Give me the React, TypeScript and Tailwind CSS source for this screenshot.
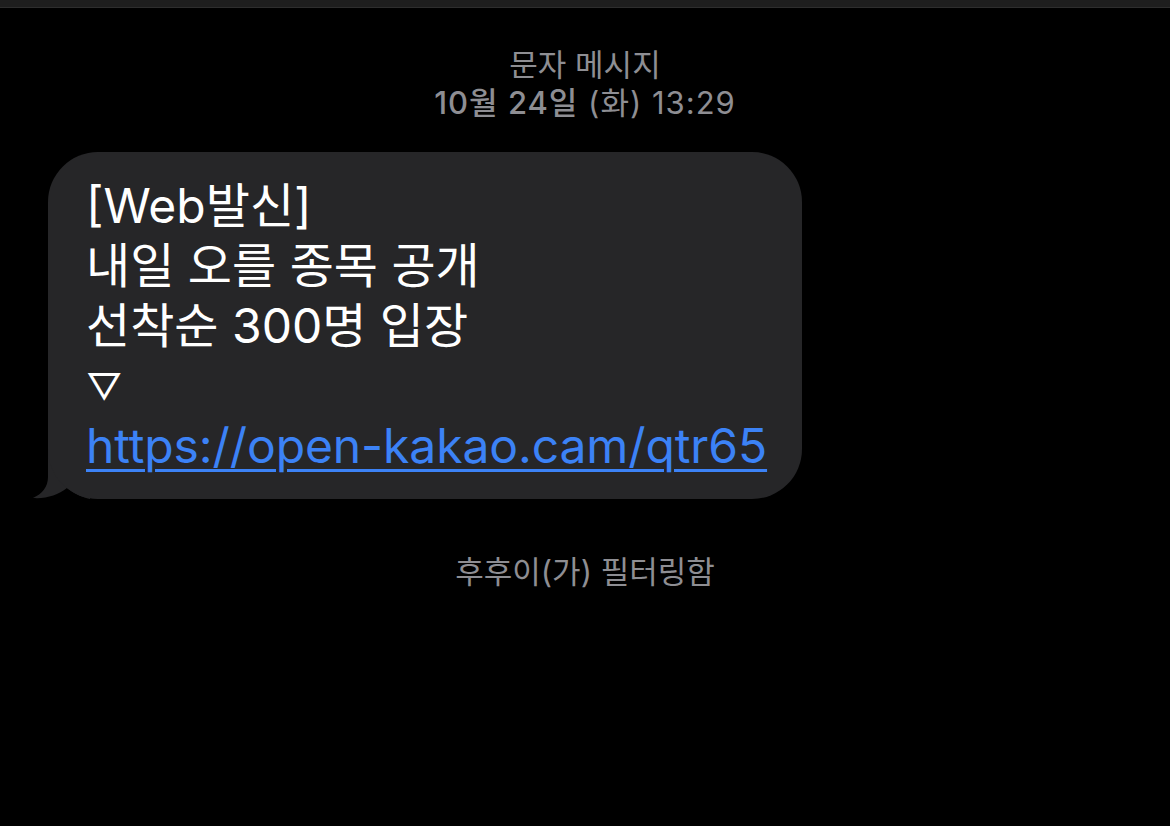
import React from 'react';

const FONT = 'font-["Inter","Noto_Sans_CJK_KR",sans-serif]';

// Little curl at the bottom-left of an incoming bubble
function BubbleTail() {
  return (
    <svg
      className="absolute left-[-18px] bottom-0"
      width="60"
      height="50"
      viewBox="0 0 60 50"
    >
      <path
        d="M18 0 L18 28 C18 38 12 45 3 49 C16 50 28 46 37 39 C44 45 52 48 60 50 L60 0 Z"
        fill="#262628"
      />
    </svg>
  );
}

export default function App() {
  return (
    <div className={`min-h-[826px] w-full bg-black ${FONT}`}>
      <div className="h-[8px] bg-[#1e1e1e] border-b border-[#2e2e2e]" />

      <div className="flex flex-col items-center pt-[38px] text-[#8e8e93] text-[31px] leading-[38px]">
        <span>문자 메시지</span>
        <span className="tracking-[1px]">
          <span className="font-medium">10월 24일</span> (화) 13:29
        </span>
      </div>

      <div className="pl-[48px] pt-[30px]">
        <div className="relative w-[754px]">
          <BubbleTail />
          <div className="relative rounded-[50px] bg-[#262628] pl-[38px] pr-[30px] pt-[24px] pb-[23px] text-white text-[48px] leading-[60px] whitespace-nowrap">
            <div>[Web발신]</div>
            <div>내일 오를 종목 공개</div>
            <div>선착순 300명 입장</div>
            <div className="text-[36px]">▽</div>
            <div className="text-[#3c82f6] underline decoration-[3px] underline-offset-[6px] tracking-[-0.1px]">
              https://open-kakao.cam/qtr65
            </div>
          </div>
        </div>
      </div>

      <div className="flex justify-center pt-[54px] text-[#8e8e93] text-[31px] leading-[38px]">
        <span>후후이(가) 필터링함</span>
      </div>
    </div>
  );
}
